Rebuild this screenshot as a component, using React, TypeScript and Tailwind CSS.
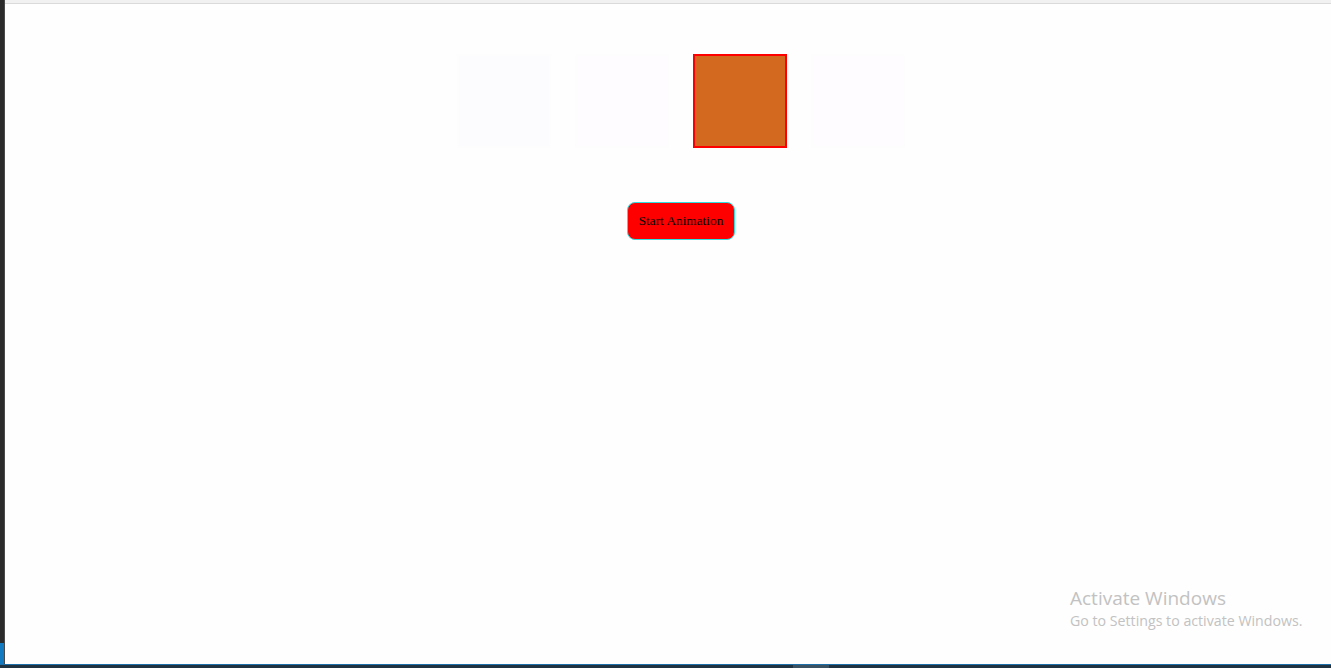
import React from 'react';

const boxes = [
  { id: 1, className: 'bg-[#fcfcfe] border-[#fdfdfe]' },
  { id: 2, className: 'bg-[#fefcfe] border-[#fefdfe]' },
  { id: 3, className: 'bg-[#d2691e] border-[#ff0000]' },
  { id: 4, className: 'bg-[#fefcfe] border-[#fefdfe]' },
];

export default function App() {
  return (
    <div className="relative flex h-[668px] w-[1331px] flex-col overflow-hidden bg-[#fefefe]">
      <div className="flex h-[664px]">
        {/* editor gutter */}
        <div className="flex w-[5px] flex-col border-r border-[#4a4a4a]">
          <div className="flex-1 bg-[#2b2b2b]" />
          <div className="h-[21px] bg-[#117ac0]" />
        </div>

        <div className="flex flex-1 flex-col">
          <div className="h-[4px] border-b border-[#dadada] bg-[#f1f1f1]" />

          <main className="flex flex-1 flex-col items-center pl-[26px] pt-[50px]">
            <div className="flex">
              {boxes.map((box) => (
                <div key={box.id} className={`mx-3 h-[94px] w-[94px] border-2 ${box.className}`} />
              ))}
            </div>

            <button
              className="mt-[54px] h-[38px] w-[108px] rounded-[8px] border border-[#2fe0e0] bg-[#ff0000] text-[13.3px] text-black"
              style={{ fontFamily: '"Liberation Serif", serif' }}
            >
              Start Animation
            </button>
          </main>
        </div>
      </div>

      {/* status bar */}
      <div className="flex h-[4px] border-t border-[#1c6fa8] bg-[#1f3340]">
        <div className="w-[793px]" />
        <div className="w-[36px] bg-[#3b5263]" />
      </div>

      <div
        className="absolute left-[1070px] top-[585px] text-[#c2c2c2]"
        style={{ fontFamily: '"Open Sans", "Noto Sans", sans-serif' }}
      >
        <div className="text-[19px] leading-[26px]">Activate Windows</div>
        <div className="text-[14.2px] leading-[20px]">Go to Settings to activate Windows.</div>
      </div>
    </div>
  );
}
